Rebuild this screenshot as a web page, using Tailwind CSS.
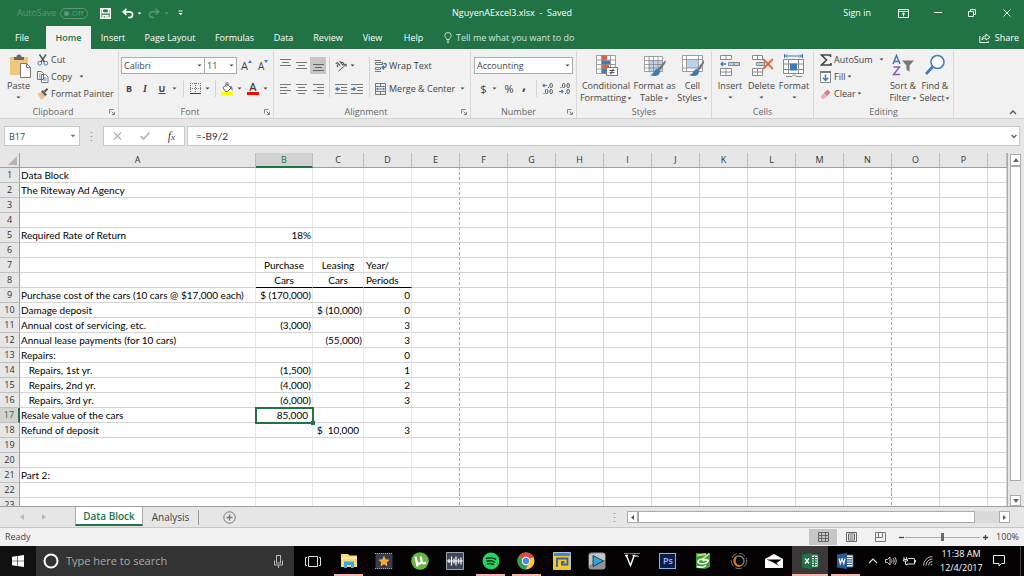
<!DOCTYPE html>
<html lang="en">
  <head>
    <meta charset="UTF-8" />
    <meta name="viewport" content="width=device-width, initial-scale=1.0" />
    <script src="https://cdn.jsdelivr.net/npm/@tailwindcss/browser@4"></script>
    <title>NguyenAExcel3.xlsx - Saved</title>
  </head>
  <body
    class="flex flex-col h-screen overflow-hidden bg-[#e6e6e6] font-['Open_Sans','Noto_Sans',sans-serif] text-[9px] leading-[12px] text-[#444444]"
  >
    <!-- shared icons -->
    <svg class="hidden">
      <symbol id="caret" viewBox="0 0 5 3"><path d="M0.5 0.5h4L2.5 2.6z" fill="currentColor" /></symbol>
      <symbol id="launcher" viewBox="0 0 6 6">
        <path d="M0.5 4.5v-4h4M2.5 2.5l2.5 2.5M5.5 2.8v2.7H2.8" fill="none" stroke="#777" stroke-width="0.9" />
      </symbol>
    </svg>

    <!-- title bar -->
    <header class="bg-[#217346] text-white shrink-0">
      <div class="grid grid-cols-[1fr_auto_1fr] items-center h-[26px]">
        <div class="flex items-center pl-[17px]">
          <label for="autosave" class="text-[#5d9777]">AutoSave</label>
          <span class="relative ml-[4px] flex items-center justify-end w-[28px] h-[11px] pr-[4px] rounded-full border border-[#5d9777] text-[8px] text-[#5d9777]">
            <input id="autosave" type="checkbox" class="absolute left-[3px] top-[2px] w-[5px] h-[5px] appearance-none rounded-full bg-[#5d9777]" />
            Off
          </span>
          <button class="ml-[12px]" aria-label="Save">
            <svg class="w-[11px] h-[11px]" viewBox="0 0 11 11" fill="none" stroke="#fff" stroke-width="1.4">
              <path d="M0.7 0.7h9.600v9.600H0.700zM2.500 0.700v4.200h6v-4.200M3 10.400V7.500h5v3" />
              <path d="M5.800 8v2" />
            </svg>
          </button>
          <button class="ml-[11px]" aria-label="Undo">
            <svg class="w-[12px] h-[11px]" viewBox="0 0 12 11" fill="none" stroke="#fff" stroke-width="1.7">
              <path d="M4.5 0.8L1.2 3.8l3.3 3M1.5 3.8h5.8c4.500 0 4.200 5.700 0 5.700H6" />
            </svg>
          </button>
          <svg class="ml-[3px] w-[5px] h-[3px]"><use href="#caret" /></svg>
          <button class="ml-[6px] text-[#5d9777]" aria-label="Redo">
            <svg class="w-[12px] h-[11px]" viewBox="0 0 12 11" fill="none" stroke="currentColor" stroke-width="1.5">
              <path d="M7.500 0.800L10.800 3.800l-3.300 3M10.500 3.800H4.700c-4.500 0-4.200 5.700 0 5.700H6" />
            </svg>
          </button>
          <svg class="ml-[4px] w-[5px] h-[3px] text-[#5d9777]"><use href="#caret" /></svg>
          <svg class="ml-[9px] w-[5px] h-[6px]" viewBox="0 0 5 6"><path d="M0.500 0.500h4v1h-4zM0.500 3h4L2.500 5.200z" fill="#fff" /></svg>
        </div>
        <h1 class="whitespace-pre">NguyenAExcel3.xlsx  -  Saved</h1>
        <div class="flex items-center justify-end pr-[13px]">
          <a href="#">Sign in</a>
          <button class="ml-[27px]" aria-label="Ribbon display options">
            <svg class="w-[11px] h-[9px]" viewBox="0 0 11 9" fill="none" stroke="#fff" stroke-width="0.900">
              <path d="M0.500 0.500h10v8h-10zM0.500 2.500h10M5.500 7.500v-3.500M3.800 5.500l1.700-1.600 1.700 1.600" />
            </svg>
          </button>
          <button class="ml-[25px]" aria-label="Minimize">
            <svg class="w-[8px] h-[8px]" viewBox="0 0 8 8"><path d="M0 3.500h8" stroke="#fff" /></svg>
          </button>
          <button class="ml-[26px]" aria-label="Restore">
            <svg class="w-[8px] h-[8px]" viewBox="0 0 8 8" fill="none" stroke="#fff" stroke-width="0.900">
              <path d="M0.500 2.500h5v5h-5zM2.500 2.500v-2h5v5h-2" />
            </svg>
          </button>
          <button class="ml-[27px]" aria-label="Close">
            <svg class="w-[8px] h-[8px]" viewBox="0 0 8 8"><path d="M0.500 0.500l7 7M7.500 0.500l-7 7" stroke="#fff" stroke-width="0.900" /></svg>
          </button>
        </div>
      </div>

      <!-- tabs -->
      <nav class="flex items-center h-[23px] whitespace-nowrap">
        <button class="w-[46px] pr-[2px]">File</button>
        <button class="w-[45px] h-full bg-[#f1f1f1] text-[#217346] font-semibold">Home</button>
        <button class="w-[44px]">Insert</button>
        <button class="w-[70px]">Page Layout</button>
        <button class="w-[59px]">Formulas</button>
        <button class="w-[39px]">Data</button>
        <button class="w-[50px]">Review</button>
        <button class="w-[39px]">View</button>
        <button class="w-[43px]">Help</button>
        <button class="flex items-center ml-[9px] text-[#d5e5dc]">
          <svg class="w-[8px] h-[11px] mr-[4px]" viewBox="0 0 8 11" fill="none" stroke="#d5e5dc">
            <path d="M2.700 7.500C2.700 6 0.800 5.500 0.800 3.500a3.200 3 0 0 1 6.400 0C7.200 5.500 5.300 6 5.300 7.500zM2.700 9h2.600M3 10.500h2" stroke-width="0.900" />
          </svg>
          Tell me what you want to do
        </button>
        <button class="flex items-center ml-auto pr-[5px]">
          <svg class="w-[12px] h-[10px] mr-[4px]" viewBox="0 0 12 10" fill="none" stroke="#fff" stroke-width="0.900">
            <path d="M0.800 3v6.500h8.500V8M3 7c0-3 1.500-4 4-4V1l4 3.300L7 7V5.200C5 5 4 5.500 3 7z" />
          </svg>
          Share
        </button>
      </nav>
    </header>

    <!-- ribbon -->
    <section class="flex h-[70px] shrink-0 bg-[#f1f1f1] border-b border-[#d2d2d2] pt-[2px] whitespace-nowrap">
      <!-- clipboard -->
      <div class="flex flex-col w-[119px] border-r border-[#d8d8d8]">
        <div class="flex flex-1">
          <button class="flex flex-col items-center w-[37px] pt-[3px]">
            <svg class="w-[22px] h-[24px] ml-[3px] mb-[2px]" viewBox="0 0 22 24">
              <path d="M1 3h18v18H1z" fill="#eec77d" />
              <path d="M5 3h2.500a2.500 2.500 0 0 1 5 0H15v3H5z" fill="#666" />
              <path d="M11.500 9.500h6l4 4v10h-10z" fill="#fff" stroke="#777" />
              <path d="M17.500 9.500v4h4" fill="none" stroke="#777" />
            </svg>
            Paste
            <svg class="mt-[4px] w-[5px] h-[3px]"><use href="#caret" /></svg>
          </button>
          <div class="flex flex-col">
            <button class="flex items-center h-[17px]">
              <svg class="w-[12px] h-[12px] mr-[2px]" viewBox="0 0 12 12" fill="none">
                <path d="M2.500 0.500l5 7.500M9 0.500L4 8" stroke="#555" stroke-width="1.500" />
                <circle cx="2.700" cy="9.200" r="1.900" stroke="#3e7ab8" /><circle cx="8.800" cy="9.200" r="1.900" stroke="#3e7ab8" />
              </svg>
              Cut
            </button>
            <button class="flex items-center h-[17px]">
              <svg class="w-[12px] h-[12px] mr-[2px]" viewBox="0 0 12 12" fill="#fff" stroke="#666" stroke-width="0.900">
                <path d="M0.500 0.500h4l2 2v6h-6zM4.500 3.500h4l2.500 2.500v5.500H4.500z" />
                <path d="M2 3h1.500M2 5h1.500M2 7h1.500M6 7h3.500M6 9h3.500" stroke="#3e7ab8" />
              </svg>
              Copy
              <svg class="ml-[7px] w-[5px] h-[3px]"><use href="#caret" /></svg>
            </button>
            <button class="flex items-center h-[17px]">
              <svg class="w-[12px] h-[12px] mr-[2px]" viewBox="0 0 12 12">
                <path d="M0.500 6l4-2.500 4 4.500-4 4z" fill="#eec08a" />
                <path d="M4 3.500L6 2l4 4.500-1.800 1.700z" fill="#666" /><path d="M7.500 3.700L10.500 0.800" stroke="#555" stroke-width="2" />
              </svg>
              Format Painter
            </button>
          </div>
        </div>
        <div class="flex items-center justify-center relative text-[#666]">
          <span class="pr-[12px]">Clipboard</span>
          <button class="absolute right-[3px]" aria-label="Clipboard settings"><svg class="w-[6px] h-[6px]"><use href="#launcher" /></svg></button>
        </div>
      </div>

      <!-- font -->
      <div class="flex flex-col w-[155px] border-r border-[#d8d8d8]">
        <div class="flex-1 pl-[2px] pt-[6px]">
          <div class="flex items-center h-[17px]">
            <span class="relative flex items-center w-[84px] h-full">
              <select aria-label="Font" class="appearance-none w-full h-full bg-white border border-[#ababab] pl-[2px]">
                <option>Calibri</option>
              </select>
              <svg class="absolute right-[3px] w-[5px] h-[3px]"><use href="#caret" /></svg>
            </span>
            <span class="relative flex items-center w-[32px] h-full">
              <select aria-label="Font size" class="appearance-none w-full h-full bg-white border border-l-0 border-[#ababab] pl-[2px]">
                <option>11</option>
              </select>
              <svg class="absolute right-[3px] w-[5px] h-[3px]"><use href="#caret" /></svg>
            </span>
            <button class="ml-[4px] flex text-[11px]" aria-label="Increase font size">A<svg class="w-[4px] h-[3px]"><path d="M0 3l2-3 2 3z" fill="#3e7ab8" /></svg></button>
            <button class="ml-[6px] flex text-[10px]" aria-label="Decrease font size">A<svg class="w-[4px] h-[3px]"><path d="M0 0l2 3 2-3z" fill="#3e7ab8" /></svg></button>
          </div>
          <div class="flex items-center h-[17px] mt-[6px]">
            <button class="w-[16px] font-bold">B</button>
            <button class="w-[16px] italic font-['Liberation_Serif',serif] text-[10px] font-bold">I</button>
            <button class="w-[18px] font-bold underline">U</button>
            <svg class="ml-[1px] w-[5px] h-[3px]"><use href="#caret" /></svg>
            <span class="ml-[6px] w-px h-full bg-[#d4d4d4]"></span>
            <button class="ml-[6px]" aria-label="Borders">
              <svg class="w-[11px] h-[11px]" viewBox="0 0 11 11" fill="none" stroke="#777">
                <path d="M0.500 0v10M10.500 0v10M5.500 0v10M0 0.500h11M0 5.500h11" stroke-dasharray="1 1" /><path d="M0 10.500h11" stroke="#444" />
              </svg>
            </button>
            <svg class="ml-[4px] w-[5px] h-[3px]"><use href="#caret" /></svg>
            <span class="ml-[5px] w-px h-full bg-[#d4d4d4]"></span>
            <button class="ml-[5px]" aria-label="Fill color">
              <svg class="w-[13px] h-[13px]" viewBox="0 0 13 13">
                <path d="M2 5.500l4-3.500 4 4-3.500 3.500H4.500z" fill="#fff" stroke="#666" /><path d="M5 5V0.800h2V4" fill="none" stroke="#666" stroke-width="0.800" />
                <path d="M9 4c2 0 3 1.500 2.500 5-1-1-1-2.500-2-3z" fill="#3e7ab8" /><path d="M0 10h12v3H0z" fill="#ffff00" />
              </svg>
            </button>
            <svg class="ml-[3px] w-[5px] h-[3px]"><use href="#caret" /></svg>
            <button class="ml-[5px] flex flex-col items-center w-[12px] h-[13px] text-[11px] leading-[10px] font-semibold border-b-3 border-[#ff0000]" aria-label="Font color">A</button>
            <svg class="ml-[4px] w-[5px] h-[3px]"><use href="#caret" /></svg>
          </div>
        </div>
        <div class="flex items-center justify-center relative text-[#666]">
          <span class="pr-[12px]">Font</span>
          <button class="absolute right-[3px]" aria-label="Font settings"><svg class="w-[6px] h-[6px]"><use href="#launcher" /></svg></button>
        </div>
      </div>

      <!-- alignment -->
      <div class="flex flex-col w-[197px] border-r border-[#d8d8d8]">
        <div class="flex flex-1 pl-[3px] pt-[6px]">
          <div class="flex flex-col gap-[6px]">
            <div class="flex items-center h-[17px]">
              <button class="flex justify-center w-[16px] h-full pt-[2px]" aria-label="Top align"><svg class="w-[11px] h-[8px]"><path d="M0 0.500h11M2 3.500h7M0 6.500h11" stroke="#777" /></svg></button>
              <button class="flex items-center justify-center w-[17px] h-full" aria-label="Middle align"><svg class="w-[11px] h-[8px]"><path d="M0 0.500h11M2 3.500h7M0 6.500h11" stroke="#777" /></svg></button>
              <button class="flex items-end justify-center w-[16px] h-full pb-[2px] bg-[#c6c6c6]" aria-label="Bottom align"><svg class="w-[11px] h-[8px]"><path d="M0 0.500h11M2 3.500h7M0 6.500h11" stroke="#666" /></svg></button>
            </div>
            <div class="flex items-center h-[17px]">
              <button class="flex justify-center w-[16px]" aria-label="Align left"><svg class="w-[11px] h-[10px]"><path d="M0 0.500h11M0 3.500h7M0 6.500h11M0 9.500h7" stroke="#777" /></svg></button>
              <button class="flex justify-center w-[17px]" aria-label="Center"><svg class="w-[11px] h-[10px]"><path d="M0 0.500h11M2 3.500h7M0 6.500h11M2 9.500h7" stroke="#777" /></svg></button>
              <button class="flex justify-center w-[16px]" aria-label="Align right"><svg class="w-[11px] h-[10px]"><path d="M0 0.500h11M4 3.500h7M0 6.500h11M4 9.500h7" stroke="#777" /></svg></button>
            </div>
          </div>
          <span class="ml-[3px] w-px h-[40px] bg-[#d4d4d4]"></span>
          <div class="flex flex-col gap-[6px] w-[39px] pl-[5px]">
            <button class="flex items-center h-[17px]" aria-label="Orientation">
              <svg class="w-[12px] h-[12px]" viewBox="0 0 12 12" fill="none" stroke="#555">
                <path d="M0.800 3.800c1-1.500 2.500-1 3 0l1.200 2M3.800 4.500c-2 0-2.200 2.300-.5 2.200M4.500 0.800L8 5.500M6.200 3c1.200-1.500 3.300 0 1.800 2.200" stroke-width="1.100" /><path d="M3.500 11.200L11 4.500M11.300 4.200L8.800 4.500M11.300 4.200L11 6.800" />
              </svg>
              <svg class="ml-[3px] w-[5px] h-[3px]"><use href="#caret" /></svg>
            </button>
            <div class="flex items-center gap-[4px] h-[17px]">
              <button aria-label="Decrease indent">
                <svg class="w-[12px] h-[10px]" viewBox="0 0 12 10" fill="none"><path d="M0 0.500h12M6 3.500h6M6 6.500h6M0 9.500h12" stroke="#777" /><path d="M5 5H1M2.800 3.200L1 5l1.800 1.800" stroke="#3e7ab8" stroke-width="1.300" /></svg>
              </button>
              <button aria-label="Increase indent">
                <svg class="w-[12px] h-[10px]" viewBox="0 0 12 10" fill="none"><path d="M0 0.500h12M6 3.500h6M6 6.500h6M0 9.500h12" stroke="#777" /><path d="M0 5h4M2.500 3.200L4.300 5 2.500 6.800" stroke="#3e7ab8" stroke-width="1.300" /></svg>
              </button>
            </div>
          </div>
          <span class="w-px h-[40px] bg-[#d4d4d4]"></span>
          <div class="flex flex-col gap-[6px] pl-[5px]">
            <button class="flex items-center h-[17px]">
              <svg class="w-[12px] h-[12px] mr-[2px]" viewBox="0 0 12 12" fill="none"><path d="M0 0.500h6M0 11.500h6M0.500 2.500h7v2h-7zM0.500 7.500h5v2h-5z" stroke="#777" /><path d="M8.500 3.500H10c2 0 1.500 4-.5 4H7M9 5.500L7 7.500l2 2" stroke="#3e7ab8" stroke-width="1.300" /></svg>
              Wrap Text
            </button>
            <button class="flex items-center h-[17px]">
              <svg class="w-[12px] h-[12px] mr-[2px]" viewBox="0 0 12 12" fill="none"><path d="M0.500 0.500h10v11h-10zM0.500 3.500h10M0.500 8.500h10M5.500 0.500v3M5.500 8.500v3" stroke="#777" /><path d="M1.500 6h8M3 4.800L1.700 6 3 7.200M8 4.800L9.300 6 8 7.200" stroke="#3e7ab8" /></svg>
              Merge &amp; Center
              <svg class="ml-[5px] w-[5px] h-[3px]"><use href="#caret" /></svg>
            </button>
          </div>
        </div>
        <div class="flex items-center justify-center relative text-[#666]">
          <span class="pr-[12px]">Alignment</span>
          <button class="absolute right-[3px]" aria-label="Alignment settings"><svg class="w-[6px] h-[6px]"><use href="#launcher" /></svg></button>
        </div>
      </div>

      <!-- number -->
      <div class="flex flex-col w-[106px] border-r border-[#d8d8d8]">
        <div class="flex-1 pl-[3px] pt-[6px]">
          <span class="relative flex items-center w-[99px] h-[17px]">
            <select aria-label="Number format" class="appearance-none w-full h-full bg-white border border-[#ababab] pl-[2px]">
              <option>Accounting</option>
            </select>
            <svg class="absolute right-[3px] w-[5px] h-[3px]"><use href="#caret" /></svg>
          </span>
          <div class="flex items-center h-[17px] mt-[6px]">
            <button class="ml-[4px] w-[11px] text-[11px]">$</button>
            <svg class="ml-[3px] w-[5px] h-[3px]"><use href="#caret" /></svg>
            <button class="ml-[6px] w-[12px] text-[11px]">%</button>
            <button class="ml-[5px] w-[8px] font-bold text-[14px] leading-[8px] pb-[7px]">,</button>
            <span class="ml-[8px] w-px h-full bg-[#d4d4d4]"></span>
            <button class="ml-[5px]" aria-label="Increase decimal">
              <svg class="w-[12px] h-[11px]" viewBox="0 0 12 11" fill="none"><path d="M5 2.500H1M2.500 1L1 2.500 2.500 4" stroke="#3e7ab8" stroke-width="1.200" /><g stroke="#555"><rect x="8" y="0.500" width="2.300" height="4" rx="1" /><rect x="3.500" y="6.500" width="2.300" height="4" rx="1" /><rect x="8" y="6.500" width="2.300" height="4" rx="1" /><path d="M6 4.500h1M1.500 10.500h1" /></g></svg>
            </button>
            <button class="ml-[5px]" aria-label="Decrease decimal">
              <svg class="w-[12px] h-[11px]" viewBox="0 0 12 11" fill="none"><path d="M0 8.500h4M2.500 7L4 8.500 2.500 10" stroke="#3e7ab8" stroke-width="1.200" /><g stroke="#555"><rect x="3.500" y="0.500" width="2.300" height="4" rx="1" /><rect x="8" y="0.500" width="2.300" height="4" rx="1" /><rect x="8" y="6.500" width="2.300" height="4" rx="1" /><path d="M1.500 4.500h1M6 10.500h1" /></g></svg>
            </button>
          </div>
        </div>
        <div class="flex items-center justify-center relative text-[#666]">
          <span class="pr-[10px]">Number</span>
          <button class="absolute right-[3px]" aria-label="Number settings"><svg class="w-[6px] h-[6px]"><use href="#launcher" /></svg></button>
        </div>
      </div>

      <!-- styles -->
      <div class="flex flex-col w-[135px] border-r border-[#d8d8d8]">
        <div class="flex flex-1 pl-[3px] pt-[3px]">
          <button class="flex flex-col items-center w-[52px]">
            <svg class="w-[24px] h-[24px] mb-[2px]" viewBox="0 0 24 24">
              <path d="M2.500 1.500h19v19h-19z" fill="#fff" /><path d="M8 1.500h5v5H8z" fill="#e0603a" /><path d="M8 6.500h8v4H8z" fill="#3e7ab8" /><path d="M8 10.500h7v4H8z" fill="#e0603a" /><path d="M8 14.500h4v5H8z" fill="#3e7ab8" />
              <path d="M2.500 1.500h19v18h-19zM7.500 1.500v18M16.500 1.500v18M2.500 6h19M2.500 10.500h19M2.500 15h19" fill="none" stroke="#888" stroke-width="0.800" />
              <path d="M12.500 13.500h11v8h-11z" fill="#fff" stroke="#777" /><path d="M15.500 16.500h5M15.500 18.700h5M19.500 14.800l-3 5.500" stroke="#444" />
            </svg>
            Conditional
            <span class="flex items-center">Formatting <svg class="ml-[1px] w-[5px] h-[3px]"><use href="#caret" /></svg></span>
          </button>
          <button class="flex flex-col items-center w-[45px]">
            <svg class="w-[24px] h-[24px] mb-[2px]" viewBox="0 0 24 24">
              <path d="M1.500 2.500h18v15h-18z" fill="#fff" /><path d="M6 6.500h13v11H6z" fill="#bcd2ea" />
              <path d="M1.500 2.500h18v15h-18zM6 2.500v15M10.500 2.500v15M15 2.500v15M1.500 6.500h18M1.500 10.500h18M1.500 14h18" fill="none" stroke="#888" stroke-width="0.800" />
              <path d="M22.500 6l-8 9 2 2 6-8z" fill="#777" /><path d="M14.500 15c-4 0-3 5-7.500 6 4 2 10 1.500 10-4z" fill="#3e7ab8" />
            </svg>
            Format as
            <span class="flex items-center">Table <svg class="ml-[1px] w-[5px] h-[3px]"><use href="#caret" /></svg></span>
          </button>
          <button class="flex flex-col items-center w-[31px]">
            <svg class="w-[24px] h-[24px] mb-[2px]" viewBox="0 0 24 24">
              <path d="M1.500 1.500h20v16h-20z" fill="#fff" stroke="#888" stroke-width="0.800" /><path d="M6 6h11v8H6z" fill="#bcd2ea" />
              <path d="M1.500 5.500h20M1.500 14h20M5.500 1.500v16M17.500 1.500v16" stroke="#888" stroke-width="0.800" />
              <path d="M23 6l-7 9 2 2 5-8z" fill="#777" /><path d="M16 15c-4 0-3 5-8 6 4 2 10 1.500 10-4z" fill="#3e7ab8" />
            </svg>
            Cell
            <span class="flex items-center">Styles <svg class="ml-[1px] w-[5px] h-[3px]"><use href="#caret" /></svg></span>
          </button>
        </div>
        <div class="text-center text-[#666]">Styles</div>
      </div>

      <!-- cells -->
      <div class="flex flex-col w-[102px] border-r border-[#d8d8d8]">
        <div class="flex flex-1 pl-[3px] pt-[3px]">
          <button class="flex flex-col items-center w-[30px]">
            <svg class="w-[22px] h-[24px] mb-[2px]" viewBox="0 0 22 24">
              <path d="M1.500 1.500h11v4h-11zM7 1.500v4M1.500 14.500h11v7h-11zM7 14.500v7M1.500 18h11" fill="#fff" stroke="#888" />
              <path d="M9.500 8.500h11v3h-11zM15 8.500v3" fill="#bcd2ea" stroke="#888" /><path d="M7 10H2M4 8l-2 2 2 2" fill="none" stroke="#3e7ab8" stroke-width="1.300" />
            </svg>
            Insert
            <svg class="mt-[4px] w-[5px] h-[3px]"><use href="#caret" /></svg>
          </button>
          <button class="flex flex-col items-center w-[33px]">
            <svg class="w-[22px] h-[24px] mb-[2px]" viewBox="0 0 22 24">
              <path d="M1.500 1.500h10v4h-10zM6.500 1.500v4M1.500 14.500h10v7h-10zM6.500 14.500v7M1.500 18h10" fill="#fff" stroke="#888" />
              <path d="M5.500 8.500h8v3h-8z" fill="#bcd2ea" stroke="#888" /><path d="M12 5l10 10M22 5L12 15" stroke="#e0603a" stroke-width="1.800" />
            </svg>
            Delete
            <svg class="mt-[4px] w-[5px] h-[3px]"><use href="#caret" /></svg>
          </button>
          <button class="flex flex-col items-center w-[32px]">
            <svg class="w-[24px] h-[24px] mb-[2px]" viewBox="0 0 24 24">
              <path d="M2.500 0v4M20.500 0v4M3 2h17M5 0.500L3.500 2 5 3.500M18 0.500L19.500 2 18 3.500" fill="none" stroke="#3e7ab8" />
              <path d="M1.500 5.500h20v15h-20z" fill="#fff" /><path d="M1.500 5.500h20v14h-20zM6.500 5.500v14M16.500 5.500v14M1.500 10h20M1.500 15.500h20M4 22.500h6l2-2 2 2h6" fill="none" stroke="#888" />
              <path d="M8 9.500h7v7H8z" fill="#3e7ab8" />
            </svg>
            Format
            <svg class="mt-[4px] w-[5px] h-[3px]"><use href="#caret" /></svg>
          </button>
        </div>
        <div class="text-center text-[#666]">Cells</div>
      </div>

      <!-- editing -->
      <div class="flex flex-col w-[140px] border-r border-[#d8d8d8]">
        <div class="flex flex-1 pl-[6px]">
          <div class="flex flex-col w-[67px]">
            <button class="flex items-center h-[17px]">
              <svg class="w-[12px] h-[12px] mr-[2px]" viewBox="0 0 12 12"><path d="M10.500 3V1H1.500l5 5-5 5h9.500V9" fill="none" stroke="#444" stroke-width="1.600" /></svg>
              AutoSum
              <svg class="ml-auto mr-[3px] w-[5px] h-[3px]"><use href="#caret" /></svg>
            </button>
            <button class="flex items-center h-[17px]">
              <svg class="w-[12px] h-[12px] mr-[2px]" viewBox="0 0 12 12"><path d="M0.500 0.500h10v11h-10z" fill="#fff" stroke="#888" /><path d="M0 0h11v2H0z" fill="#777" /><path d="M5.500 3.500v6M2.800 6.800l2.700 2.700 2.700-2.700" fill="none" stroke="#3e7ab8" stroke-width="1.500" /></svg>
              Fill
              <svg class="ml-[2px] w-[5px] h-[3px]"><use href="#caret" /></svg>
            </button>
            <button class="flex items-center h-[17px]">
              <svg class="w-[12px] h-[12px] mr-[2px]" viewBox="0 0 12 12"><path d="M1 8l2.500-2.500 3 3L4 11H2.500L1 9.500z" fill="#f2a7b4" /><path d="M3.800 5.200L7.500 1.500l3 3-3.700 3.700z" fill="#e4788c" /></svg>
              Clear
              <svg class="ml-[1px] w-[5px] h-[3px]"><use href="#caret" /></svg>
            </button>
          </div>
          <button class="flex flex-col items-center w-[32px] pt-[3px]">
            <svg class="w-[24px] h-[24px] mb-[2px]" viewBox="0 0 24 24" fill="none">
              <path d="M2 10L5.500 1.500 9 10M3.300 7.500h4.500" stroke="#3e7ab8" stroke-width="1.500" /><path d="M2.500 13h6L2.500 20.500h6.500" stroke="#8e5bb5" stroke-width="1.500" />
              <path d="M11 6.500h12l-4.500 5v6l-3-1.500v-4.500z" fill="#777" />
            </svg>
            Sort &amp;
            <span class="flex items-center">Filter <svg class="ml-[1px] w-[5px] h-[3px]"><use href="#caret" /></svg></span>
          </button>
          <button class="flex flex-col items-center w-[32px] pt-[3px]">
            <svg class="w-[22px] h-[24px] mb-[2px]" viewBox="0 0 22 24" fill="none">
              <circle cx="13.500" cy="8" r="6.500" fill="#fff" stroke="#3e7ab8" stroke-width="1.500" /><path d="M8.500 13L2 20" stroke="#3e7ab8" stroke-width="2.600" />
            </svg>
            Find &amp;
            <span class="flex items-center">Select <svg class="ml-[1px] w-[5px] h-[3px]"><use href="#caret" /></svg></span>
          </button>
        </div>
        <div class="text-center text-[#666]">Editing</div>
      </div>
      <button class="self-end ml-auto mr-[7px] mb-[3px]" aria-label="Collapse ribbon">
        <svg class="w-[8px] h-[5px]"><path d="M1 4l3-3 3 3" fill="none" stroke="#555" stroke-width="1.300" /></svg>
      </button>
    </section>

    <!-- formula bar -->
    <section class="flex items-center h-[34px] shrink-0 pl-[4px] pr-[4px]">
      <label class="relative flex items-center w-[76px] h-[20px]">
        <input aria-label="Name box" value="B17" class="w-full h-full bg-white border border-[#c8c8c8] pl-[4px]" />
        <svg class="absolute right-[4px] w-[6px] h-[4px] text-[#777]"><use href="#caret" /></svg>
      </label>
      <svg class="ml-[10px] w-[3px] h-[9px]"><path d="M1.500 0v9" stroke="#999" stroke-dasharray="1 3" stroke-width="1.500" /></svg>
      <div class="flex items-center justify-around ml-[10px] w-[82px] h-[20px] bg-white border border-[#c8c8c8]">
        <button aria-label="Cancel"><svg class="w-[9px] h-[8px]"><path d="M1 0.500l7 7M8 0.500l-7 7" stroke="#b5b5b5" stroke-width="1.500" /></svg></button>
        <button aria-label="Enter"><svg class="w-[10px] h-[8px]"><path d="M0.500 4l3 3 6-6.500" fill="none" stroke="#b5b5b5" stroke-width="1.700" /></svg></button>
        <button class="italic font-['Liberation_Serif',serif] text-[12px]" aria-label="Insert function">f<span class="text-[9px]">x</span></button>
      </div>
      <div class="relative flex items-center flex-1 ml-[2px] h-[20px]">
        <input aria-label="Formula bar" value="=-B9/2" class="w-full h-full bg-white border border-[#c8c8c8] pl-[8px] font-[Lato,sans-serif] text-[10px] text-[#333]" />
        <svg class="absolute right-[3px] w-[6px] h-[5px]"><path d="M0.500 1l2.500 2.500L5.500 1" fill="none" stroke="#666" stroke-width="1.500" /></svg>
      </div>
    </section>

    <!-- sheet -->
    <main class="flex flex-1 min-h-0 overflow-hidden">
      <div class="flex-1 min-w-0 overflow-hidden border-r border-[#ababab]">
        <table class="table-fixed w-full border-separate border-spacing-0 font-[Lato,sans-serif] text-[10px] leading-[14px] text-black">
          <colgroup id="cols"></colgroup>
          <thead>
            <tr id="letters"></tr>
          </thead>
          <tbody id="rows"></tbody>
        </table>
      </div>
      <!-- vertical scrollbar -->
      <div class="flex flex-col w-[16px] pl-[2px] pr-[3px] pt-[1px]">
        <button class="flex items-center justify-center h-[12px] bg-white border border-[#ababab]" aria-label="Scroll up"><svg class="w-[6px] h-[4px]"><path d="M0 4l3-4 3 4z" fill="#666" /></svg></button>
        <div class="flex-1 bg-white border border-[#ababab] mb-[14px]"></div>
        <button class="flex items-center justify-center h-[11px] bg-white border border-[#ababab]" aria-label="Scroll down"><svg class="w-[6px] h-[4px]"><path d="M0 0l3 4 3-4z" fill="#666" /></svg></button>
      </div>
    </main>

    <!-- sheet tabs -->
    <section class="flex items-center h-[22px] shrink-0 border-t border-[#9f9f9f] border-b border-b-[#c6c6c6] text-[10px]">
      <div class="flex items-center gap-[18px] w-[75px] pl-[20px]">
        <button aria-label="Previous sheet"><svg class="w-[4px] h-[6px]"><path d="M4 0v6L0 3z" fill="#b8b8b8" /></svg></button>
        <button aria-label="Next sheet"><svg class="w-[4px] h-[6px]"><path d="M0 0v6l4-3z" fill="#b8b8b8" /></svg></button>
      </div>
      <button class="self-start w-[68px] h-[19px] bg-white border-x border-[#ababab] border-b-2 border-b-[#217346] text-[#217346] font-semibold whitespace-nowrap">Data Block</button>
      <button class="w-[56px] h-[15px] border-r border-[#999]">Analysis</button>
      <button class="ml-[24px]" aria-label="New sheet">
        <svg class="w-[13px] h-[13px]" viewBox="0 0 13 13" fill="none" stroke="#777"><circle cx="6.500" cy="6.500" r="5.700" /><path d="M6.500 3.500v6M3.500 6.500h6" stroke-width="1.400" /></svg>
      </button>
      <svg class="ml-auto w-[3px] h-[9px]"><path d="M1.500 0v9" stroke="#999" stroke-dasharray="1 3" stroke-width="1.500" /></svg>
      <div class="flex items-center w-[383px] h-[12px] ml-[11px] mr-[14px]">
        <button class="flex items-center justify-center w-[11px] h-full bg-white border border-[#ababab]" aria-label="Scroll left"><svg class="w-[3px] h-[5px]"><path d="M3 0v5L0 2.500z" fill="#555" /></svg></button>
        <div class="flex-1 h-full bg-white border border-[#ababab]"></div>
        <div class="w-[24px] h-full bg-[#dadada]"></div>
        <button class="flex items-center justify-center w-[11px] h-full bg-white border border-[#ababab]" aria-label="Scroll right"><svg class="w-[3px] h-[5px]"><path d="M0 0v5l3-2.500z" fill="#555" /></svg></button>
      </div>
    </section>

    <!-- status bar -->
    <footer class="flex items-center h-[18px] shrink-0 bg-[#f1f1f1] pl-[5px] pr-[5px]">
      <span>Ready</span>
      <button class="flex items-center justify-center w-[28px] h-[16px] ml-auto bg-[#c6c6c6]" aria-label="Normal view"><svg class="w-[11px] h-[10px]" viewBox="0 0 11 10" fill="none" stroke="#666"><path d="M0.500 0.500h10v9h-10zM3.500 0v10M7.500 0v10M0 3.500h11M0 6.500h11" /></svg></button>
      <button class="flex items-center justify-center w-[29px] h-[16px]" aria-label="Page layout view"><svg class="w-[11px] h-[10px]" viewBox="0 0 11 10" fill="none" stroke="#666"><path d="M0.500 0.500h10v9h-10zM2.500 2h6v6h-6zM3.500 4h4M3.500 6h4" /></svg></button>
      <button class="flex items-center justify-center w-[28px] h-[16px]" aria-label="Page break view"><svg class="w-[11px] h-[10px]" viewBox="0 0 11 10" fill="none" stroke="#777"><path d="M0.500 0.500h10v9h-10zM3.500 0v5.500M7.500 0v5.500M0 5.500h7.500" /></svg></button>
      <button class="flex justify-center ml-[3px] w-[8px]" aria-label="Zoom out"><svg class="w-[5px] h-[5px]"><path d="M0 2.500h5" stroke="#444" stroke-width="1.300" /></svg></button>
      <input
        type="range"
        aria-label="Zoom"
        value="50"
        class="appearance-none w-[75px] h-[9px] bg-transparent bg-[linear-gradient(#aaa,#aaa)] bg-no-repeat bg-center bg-[length:100%_1px] [&::-webkit-slider-thumb]:appearance-none [&::-webkit-slider-thumb]:w-[3px] [&::-webkit-slider-thumb]:h-[8px] [&::-webkit-slider-thumb]:bg-[#666]"
      />
      <button class="ml-[3px] w-[6px]" aria-label="Zoom in"><svg class="w-[5px] h-[5px]"><path d="M0 2.500h5M2.500 0v5" stroke="#444" stroke-width="1.300" /></svg></button>
      <span class="ml-[7px]">100%</span>
    </footer>

    <!-- taskbar -->
    <section class="flex h-[30px] shrink-0 bg-[#050203] text-white">
      <button class="flex items-center justify-center w-[36px] bg-[#101010]" aria-label="Start">
        <svg class="w-[12px] h-[12px]" viewBox="0 0 12 12" fill="#fff"><path d="M0 1.700l5-0.700v4.700H0zM5.600 0.900L12 0v5.700H5.600zM0 6.300h5V11l-5-0.700zM5.600 6.300H12V12l-6.400-0.900z" /></svg>
      </button>
      <label class="flex items-center w-[258px] bg-[#333333] pl-[7px] pr-[11px]">
        <svg class="w-[16px] h-[16px]"><circle cx="8" cy="8" r="6.500" fill="none" stroke="#fff" stroke-width="2" /></svg>
        <input placeholder="Type here to search" aria-label="Search" class="flex-1 min-w-0 ml-[7px] text-[11px] bg-transparent placeholder:text-[#a8a8a8]" />
        <svg class="w-[9px] h-[13px]" viewBox="0 0 9 13" fill="none" stroke="#bbb"><rect x="2.500" y="0.500" width="4" height="7.500" /><path d="M0.500 5.500v4.500h8V5.500M4.500 10v3" /></svg>
      </label>

      <div class="flex flex-1">
        <button class="flex w-[37px] items-center justify-center" aria-label="Task view">
          <svg class="w-[16px] h-[11px]" viewBox="0 0 16 11" fill="none" stroke="#ddd"><path d="M3.500 0.500h9v10h-9zM2 1.500H0.500v8H2M14 1.500h1.500v8H14" /></svg>
        </button>
        <button class="flex flex-1 items-center justify-center" aria-label="File Explorer">
          <span class="flex items-center justify-center w-[29px] h-full border-b-2 border-[#f5b5ad]">
            <svg class="w-[18px] h-[18px] mt-[2px]" viewBox="0 0 18 18"><path d="M1 2h7l1.500 1.500H17V15H1z" fill="#f7d978" /><path d="M1 5h16v2H1z" fill="#fdeaa4" /><path d="M4 9.500h10V16h-3v-3H7v3H4z" fill="#35aadf" /></svg>
          </span>
        </button>
        <button class="flex flex-1 items-center justify-center" aria-label="Movie maker">
          <svg class="w-[18px] h-[18px]" viewBox="0 0 18 18"><path d="M0.500 1h17v16H0.500z" fill="#363c50" /><path d="M0 1.500h18M0 16.500h18" stroke="#aaa" stroke-dasharray="1 1" /><path d="M9 3.500l1.700 3.800 4.100.4-3.100 2.700.9 4L9 12.300l-3.600 2.100.9-4-3.100-2.700 4.100-.4z" fill="#f6a832" /></svg>
        </button>
        <button class="flex flex-1 items-center justify-center" aria-label="uTorrent">
          <svg class="w-[18px] h-[18px]" viewBox="0 0 18 18" fill="none"><circle cx="9" cy="9" r="8.800" fill="#68b640" /><path d="M4.500 4.500l2 10M5.500 9c1 3.800 5.500 3.200 5-.5L9.800 4.500M10.500 8.500c.3 3 2.500 3.500 4.500 2" stroke="#fff" stroke-width="2.200" /></svg>
        </button>
        <button class="flex flex-1 items-center justify-center" aria-label="Audio editor">
          <svg class="w-[18px] h-[18px]" viewBox="0 0 18 18"><path d="M0.500 0.500h17v17H0.500z" fill="#3d4658" stroke="#9aa3b2" /><path d="M1 9h16M3 7v4M5.500 4.500v9M8 6.500v5M10 4.500v9M12.500 6.500v5M15 5.500v7" stroke="#fff" stroke-width="1.200" /></svg>
        </button>
        <button class="flex flex-1 items-center justify-center" aria-label="Spotify">
          <span class="flex items-center justify-center w-[29px] h-full border-b-2 border-[#f5b5ad]">
            <svg class="w-[18px] h-[18px] mt-[2px]" viewBox="0 0 18 18" fill="none"><circle cx="9" cy="9" r="8.500" fill="#1ed760" /><path d="M4 6.500c3.500-1 7-.7 10 .9M4.500 9.300c3-.8 6-.5 8.500.8M5 12c2.500-.6 5-.4 7 .7" stroke="#111" stroke-width="1.400" /></svg>
          </span>
        </button>
        <button class="flex flex-1 items-center justify-center" aria-label="Chrome">
          <span class="flex items-center justify-center w-[29px] h-full border-b-2 border-[#f5b5ad]">
            <svg class="w-[18px] h-[18px] mt-[2px]" viewBox="0 0 18 18"><circle cx="9" cy="9" r="8.500" fill="#fbc92d" /><path d="M9 9L1.640 4.750A8.500 8.500 0 0 1 16.360 4.750z" fill="#dd4b3e" /><path d="M9 9L1.640 4.750A8.500 8.500 0 0 0 8.500 17.500L12 11z" fill="#2da253" /><path d="M9 4.750h7.360" stroke="#dd4b3e" /><circle cx="9" cy="9" r="4.200" fill="#fff" /><circle cx="9" cy="9" r="3.200" fill="#4a84ee" /></svg>
          </span>
        </button>
        <button class="flex flex-1 items-center justify-center" aria-label="PowerISO">
          <svg class="w-[18px] h-[18px]" viewBox="0 0 18 18"><path d="M0.500 0.500h17v17H0.500z" fill="#4a84c8" stroke="#a9c6e6" /><path d="M1 4h16v13H1z" fill="#f4c92b" /><path d="M4 15V6.500h10.500v6H9v-2.500h2.500" fill="none" stroke="#3d5fa5" stroke-width="1.800" /></svg>
        </button>
        <button class="flex flex-1 items-center justify-center" aria-label="Media player">
          <svg class="w-[18px] h-[18px]" viewBox="0 0 18 18"><rect x="0.500" y="0.500" width="17" height="17" rx="3" fill="#8f9496" /><path d="M1 3c5-2 11-2 16-1v6L1 13z" fill="#c2c6c8" /><path d="M5 3.500l10.500 5.500L5 14.500z" fill="#28a8e0" stroke="#123" stroke-width="0.800" /></svg>
        </button>
        <button class="flex flex-1 items-center justify-center" aria-label="Vegas">
          <svg class="w-[18px] h-[18px]" viewBox="0 0 18 18" fill="none" stroke="#fff"><path d="M1 1.500h16" stroke="#777" /><path d="M2 3.500h3M9.500 3.500h3M3.500 4l4 9.500 3.500-9.500" stroke-width="1.400" /><path d="M12.500 5c1-1.800 2-1.800 3 0" /></svg>
        </button>
        <button class="flex flex-1 items-center justify-center" aria-label="Photoshop">
          <span class="flex items-center justify-center w-[17px] h-[16px] border border-[#7cb8ee] bg-[#0c1a52] text-[#8cc4f5] text-[9px] font-semibold">Ps</span>
        </button>
        <button class="flex flex-1 items-center justify-center" aria-label="Camtasia">
          <svg class="w-[18px] h-[18px]" viewBox="0 0 18 18" fill="none"><path d="M2 1l14 1 0 13-5 2-9-1z" fill="#3d9b37" /><path d="M3 3.500l9-1.500M15.500 1.500L8.500 7" stroke="#b5e07a" stroke-width="2" /><path d="M13.500 8c-4-1.500-9-1-9.500 1.500s7 3.500 9.500.5-2.500-2.500-5-1M3 14.500c3 1 7 1 9-1" stroke="#fff" stroke-width="1.500" /></svg>
        </button>
        <button class="flex flex-1 items-center justify-center" aria-label="Origin">
          <svg class="w-[18px] h-[18px]" viewBox="0 0 18 18" fill="none"><circle cx="9" cy="9" r="7.700" stroke="#777" stroke-dasharray="7 2" /><circle cx="9" cy="9" r="5" stroke="#888" stroke-width="1.300" /><path d="M6 5.500a5 5 0 0 0 3.500 8.500" stroke="#e8761e" stroke-width="1.800" /></svg>
        </button>
        <button class="flex flex-1 items-center justify-center" aria-label="Mail">
          <svg class="w-[18px] h-[16px]" viewBox="0 0 18 16"><path d="M0 6l9-5 9 5v9H0z" fill="#fff" /><path d="M1.500 6.500h15L11.500 10l2.500 3-5.500-3.500z" fill="#050203" /></svg>
        </button>
        <button class="flex flex-1 items-center justify-center bg-[#3c3839] border-b-2 border-[#f5b5ad]" aria-label="Excel">
          <svg class="w-[18px] h-[18px] mt-[2px]" viewBox="0 0 18 18"><path d="M9 3h8v12H9z" fill="#fff" stroke="#217346" /><path d="M11 5.500h5M11 7.800h5M11 10.200h5M11 12.500h5M13.500 4v10" stroke="#217346" stroke-width="1.200" /><path d="M1 2.500L11 1v16L1 15.500z" fill="#217346" /><path d="M4 6.500l4 5M8 6.500l-4 5" stroke="#fff" stroke-width="1.300" /></svg>
        </button>
        <button class="flex flex-1 items-center justify-center" aria-label="Word">
          <span class="flex items-center justify-center w-[29px] h-full border-b-2 border-[#f5b5ad]">
            <svg class="w-[18px] h-[18px] mt-[2px]" viewBox="0 0 18 18" fill="none"><path d="M9 3h8v12H9z" fill="#fff" stroke="#2b579a" /><path d="M11 5.500h5M11 7.800h5M11 10.200h5M11 12.500h5" stroke="#2b579a" stroke-width="1.200" /><path d="M1 2.500L11 1v16L1 15.500z" fill="#2b579a" /><path d="M3 6.500l1.300 5L6 7l1.700 4.500L9 6.500" stroke="#fff" stroke-width="1.200" /></svg>
          </span>
        </button>
      </div>

      <!-- tray -->
      <div class="flex items-center pl-[5px]">
        <button aria-label="Hidden icons"><svg class="w-[10px] h-[6px]"><path d="M1 5l4-4 4 4" fill="none" stroke="#ddd" stroke-width="1.200" /></svg></button>
        <button class="ml-[7px]" aria-label="Volume">
          <svg class="w-[12px] h-[10px]" viewBox="0 0 12 10" fill="none" stroke="#ddd" stroke-width="0.900"><path d="M0.500 3.500h2L5 1v8L2.500 6.500h-2zM6.500 3.500c.8 1 .8 2 0 3M8 2.200c1.500 1.800 1.500 3.800 0 5.600M9.700 1c2 2.500 2 5.500 0 8" /></svg>
        </button>
        <button class="ml-[6px]" aria-label="Battery">
          <svg class="w-[13px] h-[10px]" viewBox="0 0 13 10" fill="none" stroke="#ddd"><path d="M5 2.500h6.500v5.500H4M12.500 4v2.500" /><path d="M1 1v2M3.500 1v2M0.500 3.500h4v1.500h-4zM2.500 5v3.500h2" /></svg>
        </button>
        <button class="ml-[7px]" aria-label="Network">
          <svg class="w-[10px] h-[10px]" viewBox="0 0 10 10" fill="none" stroke="#ccc" stroke-width="0.900"><path d="M0.500 9.500A9 9 0 0 1 9.500 0.500M3 9.500A6.500 6.500 0 0 1 9.500 3M5.500 9.500a4 4 0 0 1 4-4M8 9.500a1.500 1.500 0 0 1 1.500-1.500" /></svg>
        </button>
        <div class="ml-[7px] w-[42px] text-center leading-[14px] whitespace-nowrap">11:38 AM<br />12/4/2017</div>
        <button class="ml-[11px]" aria-label="Notifications">
          <svg class="w-[12px] h-[12px]" viewBox="0 0 12 12" fill="none" stroke="#eee"><path d="M0.500 0.500h11v8H8.500l-2.500 2.500V8.500H0.500z" /></svg>
        </button>
        <span class="ml-[15px] mr-[3px] w-px h-full bg-[#444]"></span>
      </div>
    </section>

    <script>
      const letters = ["A", "B", "C", "D", "E", "F", "G", "H", "I", "J", "K", "L", "M", "N", "O", "P", ""];
      const widths = [236, 57, 51, 48, 48, 48, 48, 48, 48, 48, 48, 48, 48, 48, 48, 48];

      // row number -> [A, B, C, D]
      const data = {
        1: ["Data Block"],
        2: ["The Riteway Ad Agency"],
        5: ["Required Rate of Return", "18%"],
        7: ["", "Purchase", "Leasing", "Year/"],
        8: ["", "Cars", "Cars", "Periods"],
        9: ["Purchase cost of the cars (10 cars @ $17,000 each)", "$ (170,000)", "", "0"],
        10: ["Damage deposit", "", "$ (10,000)", "0"],
        11: ["Annual cost of servicing, etc.", "(3,000)", "", "3"],
        12: ["Annual lease payments (for 10 cars)", "", "(55,000)", "3"],
        13: ["Repairs:", "", "", "0"],
        14: ["   Repairs, 1st yr.", "(1,500)", "", "1"],
        15: ["   Repairs, 2nd yr.", "(4,000)", "", "2"],
        16: ["   Repairs, 3rd yr.", "(6,000)", "", "3"],
        17: ["Resale value of the cars", "85,000"],
        18: ["Refund of deposit", "", "$  10,000", "3"],
        21: ["Part 2:"],
      };

      document.getElementById("cols").innerHTML =
        '<col style="width: 20px" />' +
        widths.map((w) => `<col style="width: ${w}px" />`).join("") +
        "<col />";

      document.getElementById("letters").innerHTML =
        '<th class="h-[15px] p-0 border-r border-b border-[#9f9f9f]"><svg class="ml-auto mr-[2px] w-[9px] h-[9px]"><path d="M9 0v9H0z" fill="#b4b4b4" /></svg></th>' +
        letters
          .map((l) =>
            l === "B"
              ? `<th class="h-[15px] p-0 font-['Open_Sans',sans-serif] text-[9px] font-normal border-r border-[#bbb] border-b-2 border-b-[#217346] bg-[#d2d2d2] text-[#217346] leading-[13px]">B</th>`
              : `<th class="h-[15px] p-0 font-['Open_Sans',sans-serif] text-[9px] font-normal border-r border-[#bbb] border-b border-b-[#9f9f9f] text-[#333]">${l}</th>`
          )
          .join("");

      function cell(row, col) {
        const text = (data[row] || [])[col] || "";
        let cls = "h-[15px] p-0 whitespace-pre border-b bg-white";

        // black rule under the headings
        cls += row === 8 && col >= 1 && col <= 3 ? " border-b-black" : " border-b-[#d4d4d4]";

        // page breaks after E and N, faint lines up to D
        if (col === 4 || col === 13) cls += " bg-[repeating-linear-gradient(#a6a6a6_0_3px,#fff_3px_5px)] bg-[length:1px_15px] bg-no-repeat bg-right";
        else if (col < 4) cls += " border-r border-r-[#e8e8e8]";
        else cls += " border-r border-r-[#d4d4d4]";

        if (col === 0) cls += " pl-[1px] text-left";
        else if ((row === 7 || row === 8) && col < 3) cls += " text-center";
        else if (row === 7 || row === 8) cls += " pl-[2px] text-left";
        else if (text === "85,000" || text === "$  10,000") cls += " pr-[4px] text-right";
        else cls += " pr-[1px] text-right";

        if (row === 17 && col === 1) {
          return `<td class="${cls} relative">${text}<span class="absolute -left-[1px] -top-[1px] -right-[2px] -bottom-[2px] border-2 border-[#217346]"></span><span class="absolute -right-[3px] -bottom-[3px] w-[4px] h-[4px] bg-[#217346]"></span></td>`;
        }
        return `<td class="${cls}">${text}</td>`;
      }

      let html = "";
      for (let row = 1; row <= 23; row++) {
        html += "<tr>";
        html +=
          row === 17
            ? `<th class="h-[15px] p-0 font-['Open_Sans',sans-serif] text-[9px] font-normal border-b border-b-[#c0c0c0] border-r-2 border-r-[#217346] bg-[#d2d2d2] text-[#217346]">${row}</th>`
            : `<th class="h-[15px] p-0 font-['Open_Sans',sans-serif] text-[9px] font-normal border-b border-b-[#c0c0c0] border-r border-r-[#9f9f9f] bg-[#e6e6e6] text-[#333]">${row}</th>`;
        for (let col = 0; col < letters.length; col++) html += cell(row, col);
        html += "</tr>";
      }
      document.getElementById("rows").innerHTML = html;
    </script>
  </body>
</html>
